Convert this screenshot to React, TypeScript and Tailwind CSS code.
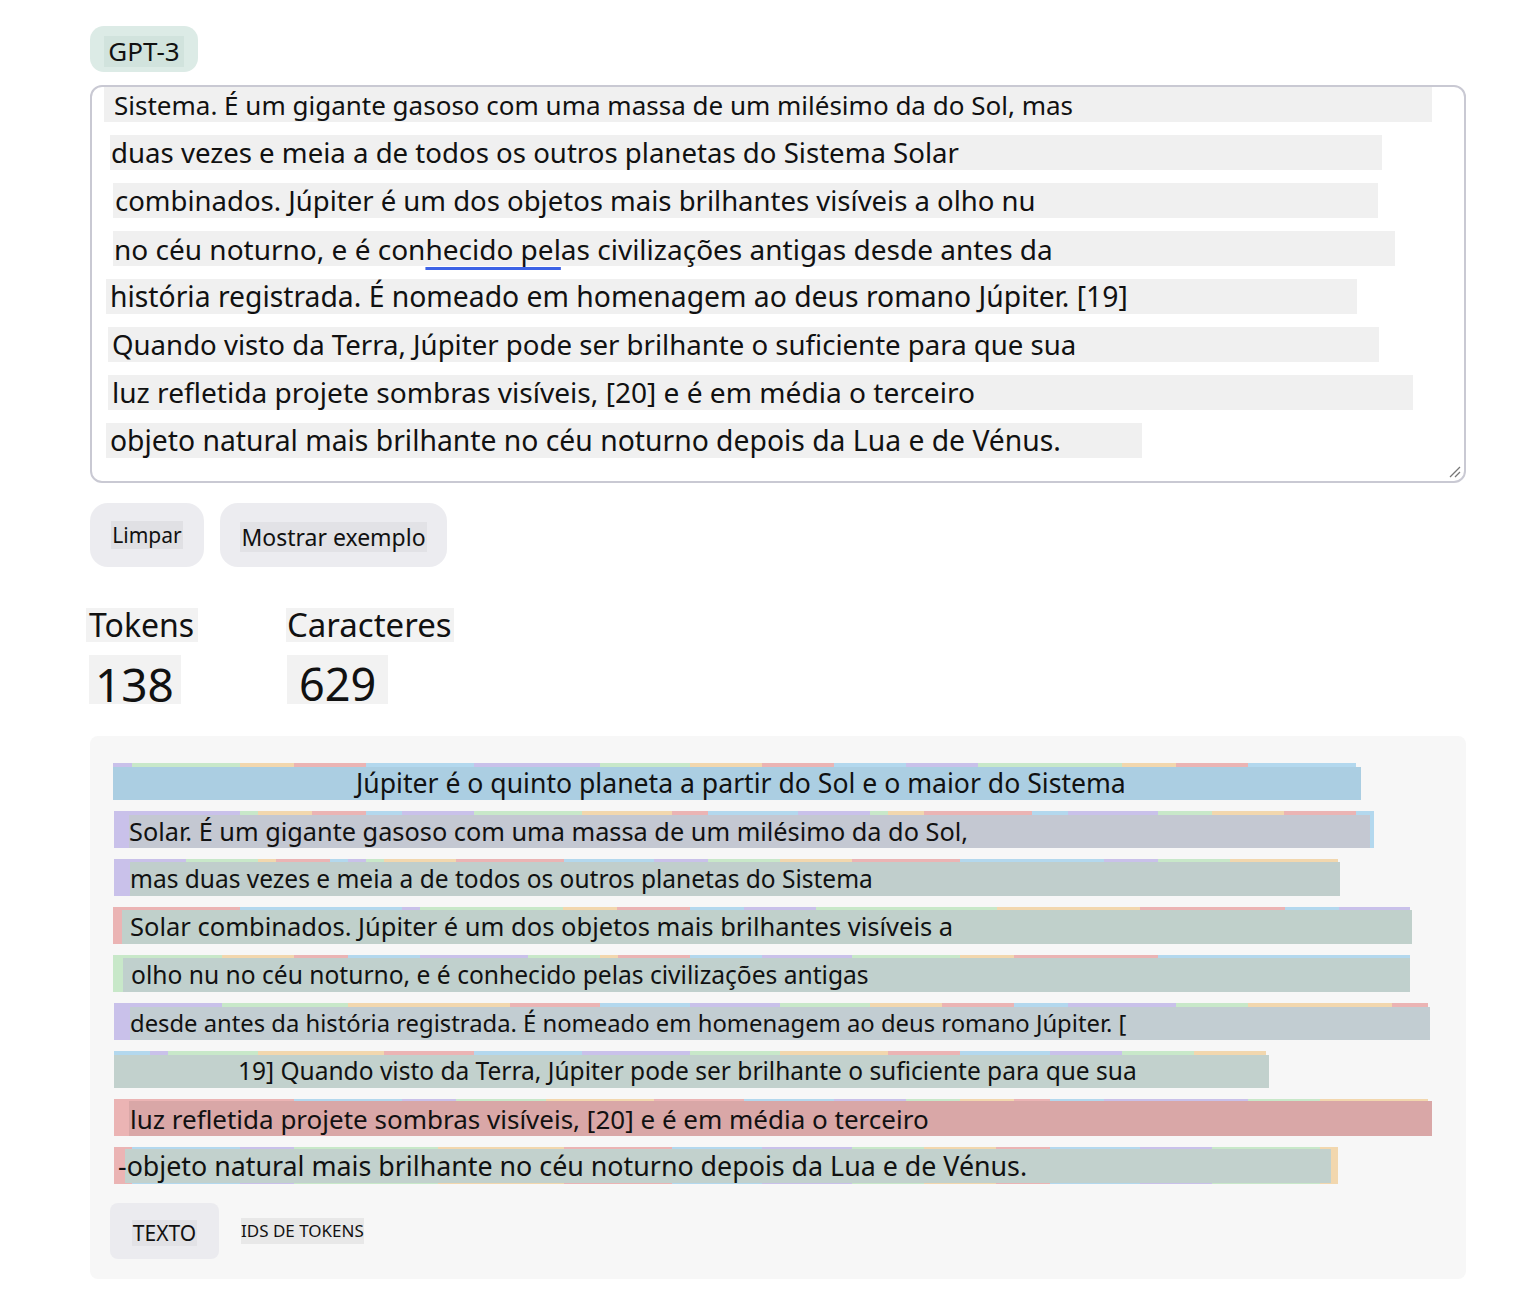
import React from 'react';

const font = { fontFamily: '"Noto Sans", "Open Sans", sans-serif' };

const TOKEN_BG = ['bg-[#c9c1ea]', 'bg-[#c8e8c9]', 'bg-[#f2d7ae]', 'bg-[#ebb4b4]', 'bg-[#b3d8ee]'];

const INPUT_LINES = [
  { bar: 'ml-[12px] w-[1328px]', pad: 'pl-[10px] text-[26px]', text: 'Sistema. É um gigante gasoso com uma massa de um milésimo da do Sol, mas' },
  { bar: 'ml-[18px] w-[1272px]', pad: 'pl-[1px] text-[27.6px]', text: 'duas vezes e meia a de todos os outros planetas do Sistema Solar' },
  { bar: 'ml-[21px] w-[1265px]', pad: 'pl-[2px] text-[27.5px]', text: 'combinados. Júpiter é um dos objetos mais brilhantes visíveis a olho nu' },
  { bar: 'ml-[21px] w-[1282px]', pad: 'pl-[1px] text-[28px]', text: '' },
  { bar: 'ml-[14px] w-[1251px]', pad: 'pl-[4px] text-[28.3px]', text: 'história registrada. É nomeado em homenagem ao deus romano Júpiter. [19]' },
  { bar: 'ml-[16px] w-[1271px]', pad: 'pl-[4px] text-[27.6px]', text: 'Quando visto da Terra, Júpiter pode ser brilhante o suficiente para que sua' },
  { bar: 'ml-[16px] w-[1305px]', pad: 'pl-[4px] text-[28.1px]', text: 'luz refletida projete sombras visíveis, [20] e é em média o terceiro' },
  { bar: 'ml-[14px] w-[1036px]', pad: 'pl-[4px] text-[28.3px]', text: 'objeto natural mais brilhante no céu noturno depois da Lua e de Vénus.' },
];

type Row = {
  start: number;
  segs: [number, number][];
  overlay: string;
  textPad: string;
  text: string;
};

const ROWS: Row[] = [
  {
    start: 113,
    segs: [[0, 132], [1, 240], [2, 294], [3, 366], [4, 474], [0, 600], [1, 690], [2, 762], [3, 834], [4, 906], [0, 978], [1, 1122], [2, 1176], [3, 1248], [4, 1356]],
    overlay: 'ml-[0px] mt-[4px] h-[33px] w-[1248px] bg-[#abcee2]',
    textPad: 'pl-[243px] text-[26.6px]',
    text: 'Júpiter é o quinto planeta a partir do Sol e o maior do Sistema',
  },
  {
    start: 114,
    segs: [[0, 240], [1, 258], [2, 312], [3, 366], [4, 402], [0, 474], [1, 582], [2, 672], [3, 708], [4, 798], [0, 870], [1, 888], [2, 924], [3, 1032], [4, 1068], [0, 1158], [1, 1212], [2, 1284], [3, 1356], [4, 1374]],
    overlay: 'ml-[16px] mt-[4px] h-[33px] w-[1241px] bg-[#c4c8d2]',
    textPad: 'pl-[0px] text-[25.3px]',
    text: 'Solar. É um gigante gasoso com uma massa de um milésimo da do Sol,',
  },
  {
    start: 114,
    segs: [[0, 186], [1, 258], [2, 276], [3, 330], [4, 348], [0, 366], [1, 384], [2, 456], [3, 564], [4, 654], [0, 708], [1, 780], [2, 852], [3, 960], [4, 1104], [0, 1158], [1, 1230], [2, 1338]],
    overlay: 'ml-[17px] mt-[3px] h-[34px] w-[1210px] bg-[#c0cecc]',
    textPad: 'pl-[0px] text-[24.5px]',
    text: 'mas duas vezes e meia a de todos os outros planetas do Sistema',
  },
  {
    start: 113,
    segs: [[3, 240], [4, 402], [0, 420], [1, 563], [2, 617], [3, 690], [4, 744], [0, 816], [1, 997], [2, 1140], [3, 1285], [4, 1339], [0, 1410]],
    overlay: 'ml-[9px] mt-[3px] h-[34px] w-[1290px] bg-[#c0d0cb]',
    textPad: 'pl-[8px] text-[25.5px]',
    text: 'Solar combinados. Júpiter é um dos objetos mais brilhantes visíveis a',
  },
  {
    start: 113,
    segs: [[1, 222], [2, 294], [3, 348], [4, 420], [0, 528], [1, 600], [2, 618], [3, 690], [4, 762], [0, 852], [1, 960], [2, 1014], [3, 1158], [4, 1410]],
    overlay: 'ml-[10px] mt-[3px] h-[34px] w-[1287px] bg-[#c0d0cd]',
    textPad: 'pl-[8px] text-[24.6px]',
    text: 'olho nu no céu noturno, e é conhecido pelas civilizações antigas',
  },
  {
    start: 114,
    segs: [[0, 222], [1, 348], [2, 510], [3, 600], [4, 690], [0, 780], [1, 870], [2, 942], [3, 1014], [4, 1068], [0, 1176], [1, 1248], [2, 1392], [3, 1428]],
    overlay: 'ml-[17px] mt-[4px] h-[33px] w-[1300px] bg-[#c2cdd2]',
    textPad: 'pl-[0px] text-[23.8px]',
    text: 'desde antes da história registrada. É nomeado em homenagem ao deus romano Júpiter. [',
  },
  {
    start: 114,
    segs: [[4, 150], [0, 168], [1, 258], [2, 384], [3, 474], [4, 582], [0, 690], [1, 780], [2, 888], [3, 960], [4, 1050], [0, 1122], [1, 1194], [2, 1266]],
    overlay: 'ml-[1px] mt-[4px] h-[33px] w-[1155px] bg-[#c2d1cd]',
    textPad: 'pl-[124px] text-[24.5px]',
    text: '19] Quando visto da Terra, Júpiter pode ser brilhante o suficiente para que sua',
  },
  {
    start: 114,
    segs: [[3, 294], [4, 402], [0, 456], [1, 546], [2, 654], [3, 744], [4, 834], [0, 906], [1, 960], [2, 1014], [3, 1050], [4, 1104], [0, 1248], [1, 1320], [2, 1428]],
    overlay: 'ml-[16px] mt-[2px] h-[35px] w-[1303px] bg-[#d9a7a7]',
    textPad: 'pl-[1px] text-[26px]',
    text: 'luz refletida projete sombras visíveis, [20] e é em média o terceiro',
  },
  {
    start: 114,
    segs: [[3, 132], [4, 240], [0, 294], [1, 438], [2, 564], [3, 672], [4, 762], [0, 852], [1, 924], [2, 996], [3, 1050], [4, 1140], [0, 1212], [1, 1320], [2, 1338]],
    overlay: 'ml-[12px] mt-[2px] h-[34px] w-[1206px] bg-[#c2d1cd]',
    textPad: '-ml-[7px] text-[26.8px]',
    text: '-objeto natural mais brilhante no céu noturno depois da Lua e de Vénus.',
  },
];

function TokenRow({ row }: { row: Row }) {
  let prev = row.start;
  return (
    <div className="grid">
      <div className={`col-start-1 row-start-1 flex h-[37px] ${row.start === 113 ? 'ml-[0px]' : 'ml-[1px]'}`}>
        {row.segs.map(([c, end], i) => {
          const w = end - prev;
          prev = end;
          return <div key={i} className={`h-full shrink-0 ${TOKEN_BG[c]}`} style={{ width: w }} />;
        })}
      </div>
      <div className={`col-start-1 row-start-1 flex items-center ${row.overlay}`}>
        <span className={`whitespace-nowrap leading-none text-[#111] ${row.textPad}`}>{row.text}</span>
      </div>
    </div>
  );
}

export default function App() {
  return (
    <div className="min-h-[1292px] bg-white pl-[90px] pt-[26px] text-[#111]" style={font}>
      <div className="w-[1376px]">
        {/* model pill */}
        <div className="flex h-[46px] w-[108px] items-center justify-center rounded-[14px] bg-[#dcebe6]">
          <span className="mt-[4px] bg-[#d1e3dd] px-[4px] text-[26px] leading-[31px]">GPT-3</span>
        </div>

        {/* input */}
        <div className="relative mt-[13px] h-[398px] rounded-[12px] border-2 border-[#c9c9d3] bg-white">
          <div className="flex flex-col gap-[13px]">
            {INPUT_LINES.map((l, i) => (
              <div key={i} className={`flex h-[35px] items-center bg-[#f0f0f0] ${l.bar}`}>
                <span className={`whitespace-nowrap leading-none ${l.pad}`}>
                  {i === 3 ? (
                    <>
                      no céu noturno, e é con
                      <span className="underline decoration-[#3d63e6] decoration-[3px] underline-offset-[7px]">hecido pel</span>
                      as civilizações antigas desde antes da
                    </>
                  ) : (
                    l.text
                  )}
                </span>
              </div>
            ))}
          </div>
          <svg className="absolute bottom-[2px] right-[2px]" width="16" height="16" viewBox="0 0 16 16">
            <path d="M14 4 L4 14 M14 9 L9 14" stroke="#777" strokeWidth="1.3" />
          </svg>
        </div>

        {/* buttons */}
        <div className="mt-[20px] flex gap-[16px]">
          <button className="flex h-[64px] w-[114px] items-center justify-center rounded-[18px] bg-[#ececf0]">
            <span className="bg-[#e0e0e4] px-[1px] text-[21px] leading-[28px]">Limpar</span>
          </button>
          <button className="flex h-[64px] w-[227px] items-center justify-center rounded-[18px] bg-[#ececf0]">
            <span className="mt-[4px] bg-[#e2e2e6] px-[1px] text-[23px] leading-[30px]">Mostrar exemplo</span>
          </button>
        </div>

        {/* stats */}
        <div className="mt-[41px] flex">
          <div className="flex w-[200px] flex-col items-start">
            <span className="-ml-[4px] bg-[#f2f2f2] pl-[3px] pr-[4px] text-[32px] leading-[34px]">Tokens</span>
            <span className="-ml-[1px] mt-[13px] h-[49px] w-[92px] bg-[#f2f2f2] pl-[6px] pt-[7px] text-[46px] leading-[44px]">138</span>
          </div>
          <div className="flex flex-col items-start">
            <span className="-ml-[4px] bg-[#f2f2f2] pl-[1px] pr-[2px] text-[33px] leading-[34px]">Caracteres</span>
            <span className="-ml-[3px] mt-[13px] h-[49px] w-[101px] bg-[#f2f2f2] pl-[12px] pt-[7px] text-[45px] leading-[44px]">629</span>
          </div>
        </div>

        {/* output */}
        <div className="mt-[32px] rounded-[8px] bg-[#f7f7f7] pb-[20px] pl-[23px] pt-[27px]">
          <div className="flex flex-col gap-[11px]">
            {ROWS.map((r, i) => (
              <TokenRow key={i} row={r} />
            ))}
          </div>
          <div className="-ml-[3px] mt-[19px] flex items-center gap-[22px]">
            <div className="flex h-[56px] w-[109px] items-center justify-center rounded-[8px] bg-[#ebebef]">
              <span className="mt-[4px] bg-[#e2e2e6] px-[1px] text-[21px] leading-[26px]">TEXTO</span>
            </div>
            <span className="bg-[#e8e8e8] text-[17px] leading-[26px]">IDS DE TOKENS</span>
          </div>
        </div>
      </div>
    </div>
  );
}
